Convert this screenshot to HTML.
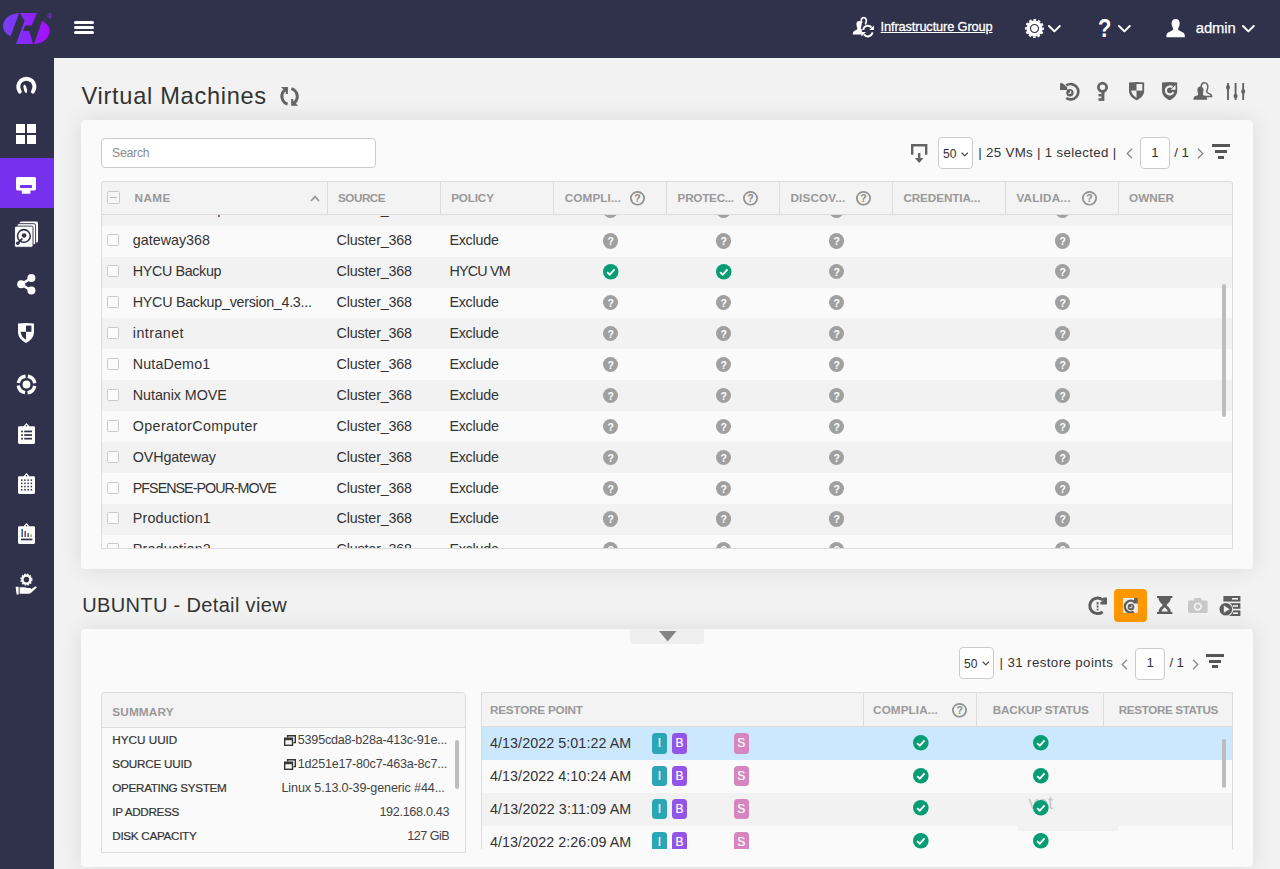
<!DOCTYPE html>
<html lang="en">
<head>
<meta charset="utf-8">
<title>Virtual Machines</title>
<style>
*{box-sizing:border-box;margin:0;padding:0}
html,body{width:1280px;height:869px;overflow:hidden}
body{background:#f2f2f2;font-family:"Liberation Sans",sans-serif;color:#333;font-size:14px;position:relative}
.abs{position:absolute}
svg{position:absolute;overflow:visible}
#top{position:absolute;left:0;top:0;width:1280px;height:58px;background:#30314a}
#side{position:absolute;left:0;top:0;width:54px;height:869px;background:#30314a}
#side .act{position:absolute;left:0;top:160px;width:54px;height:48px;background:#7631ef}
.toptxt{position:absolute;color:#fff;font-size:15px;white-space:nowrap;line-height:20px}
.card{position:absolute;left:81px;width:1172px;background:#fafafa;border-radius:4px;box-shadow:0 0 22px rgba(0,0,0,.10)}


.thead{position:absolute;background:#f3f3f3;border:1px solid #dcdcdc;border-radius:3px 3px 0 0}
.th{position:absolute;top:0;height:100%;font-weight:700;font-size:12.5px;color:#999;white-space:nowrap;line-height:31px}
.vl{position:absolute;top:0;width:1px;height:100%;background:#dcdcdc}
.tbody{position:absolute;overflow:hidden;border-left:1px solid #dcdcdc;border-right:1px solid #dcdcdc;border-bottom:1px solid #dcdcdc}
.tr{position:absolute;left:0;width:100%;background:#fafafa}
.tr.odd{background:#f2f2f2}
.tr.sel{background:#cce8ff}
.td{position:absolute;white-space:nowrap;font-size:14px;color:#333;line-height:20px}
.cb{position:absolute;width:12px;height:12px;border:1px solid #c9c9c9;border-radius:1.5px;background:#fbfbfb}
.q{position:absolute;border-radius:50%;background:#a0a0a0;color:#fff;font-weight:700;font-size:10.5px;text-align:center;line-height:16px}
.pg{position:absolute;white-space:nowrap;font-size:13.5px;color:#333;line-height:20px}
.box{position:absolute;background:#fff;border:1px solid #ccc;border-radius:4px}
.badge{position:absolute;width:15px;height:20.3px;border-radius:3.5px;color:#fff;font-size:12px;line-height:21.3px;text-align:center;-webkit-text-stroke:.2px #fff}
.sl{position:absolute;left:10px;font-size:12.5px;color:#333;white-space:nowrap;line-height:16px}
.sv{position:absolute;font-size:12.5px;color:#444;white-space:nowrap;line-height:16px}
.sb{position:absolute;width:4px;background:#bdbdbd;border-radius:2px}
.t{position:absolute;white-space:nowrap}
</style>
</head>
<body>
<div id="top"></div>
<div id="side"><div class="act" style="top:158px;height:50px"></div></div>
<svg style="left:3px;top:13px;width:47px;height:31px" viewBox="0 0 47 31">
<defs><linearGradient id="lg" gradientUnits="userSpaceOnUse" x1="0" y1="0" x2="47" y2="0"><stop offset="0" stop-color="#7442f5"/><stop offset=".5" stop-color="#8a27fa"/><stop offset="1" stop-color="#a80cff"/></linearGradient></defs>
<path fill="url(#lg)" d="M16.2 0 C7 0.5 0 6 0 13 C0 17.5 3 21.2 7.6 23.2 Z"/>
<path fill="url(#lg)" d="M17 0 H33.8 L28.8 12.4 H22 L20.2 18 H26.2 L30.2 31 H13 L21.6 7.8 Z"/>
<path fill="url(#lg)" d="M39 8 C43.5 10 46.6 13.6 46.6 18 C46.6 25.4 39.6 30.6 31 31 Z"/>
</svg>
<div class="abs" style="left:47.2px;top:13px;font-size:7px;line-height:8px;color:#a630ff">®</div>
<div class="abs" style="left:74px;top:21px;width:20px;height:3px;border-radius:1.5px;background:#fff"></div>
<div class="abs" style="left:74px;top:26px;width:20px;height:3px;border-radius:1.5px;background:#fff"></div>
<div class="abs" style="left:74px;top:31px;width:20px;height:3px;border-radius:1.5px;background:#fff"></div>
<svg style="left:16px;top:77px;width:21px;height:18px" viewBox="0 0 21 18">
<path d="M3.800 14.600 A8.100 8.100 0 1 1 16.900 14.600" fill="none" stroke="#fff" stroke-width="4" stroke-linecap="round"/>
<ellipse cx="9.300" cy="11.900" rx="1.500" ry="4.200" fill="#fff" transform="rotate(-14 9.300 11.900)"/></svg>
<div class="abs" style="left:16px;top:124px;width:9.200px;height:9.200px;background:#fff"></div>
<div class="abs" style="left:27.2px;top:124px;width:9.200px;height:9.200px;background:#fff"></div>
<div class="abs" style="left:16px;top:135.2px;width:9.200px;height:9.200px;background:#fff"></div>
<div class="abs" style="left:27.2px;top:135.2px;width:9.200px;height:9.200px;background:#fff"></div>
<svg style="left:16px;top:177px;width:20px;height:17px" viewBox="0 0 20 17">
<rect x="0" y="0" width="20" height="13.4" rx="1.6" fill="#fff"/><rect x="5.8" y="13" width="8.6" height="3.8" rx=".6" fill="#fff"/>
<rect x="4" y="8.100" width="12" height="2.900" rx=".8" fill="#7631ef"/></svg>
<svg style="left:13.600px;top:220.700px;width:24.700px;height:26.700px" viewBox="0 0 24 26">
<rect x="5.4" y="0.4" width="18" height="20.6" rx="1.6" fill="#fff"/>
<rect x="3" y="2.6" width="18" height="20.6" rx="1.6" fill="#fff" stroke="#30314a" stroke-width=".9"/>
<rect x="0.5" y="5" width="18" height="20.6" rx="1.6" fill="#fff" stroke="#30314a" stroke-width=".9"/>
<circle cx="9.6" cy="14.6" r="6.2" fill="none" stroke="#30314a" stroke-width="1.5"/>
<circle cx="9.8" cy="14.2" r="2.2" fill="#30314a"/>
<path d="M3.6 22 L7.6 17.6" stroke="#30314a" stroke-width="1.8" stroke-linecap="round"/>
<circle cx="3.6" cy="21.6" r="1.7" fill="#30314a"/></svg>
<svg style="left:17px;top:274px;width:19px;height:21px" viewBox="0 0 19 21">
<path d="M14.4 4 L4.2 10.3 L14.4 16.6" fill="none" stroke="#fff" stroke-width="2.6"/>
<circle cx="14.4" cy="4.1" r="4" fill="#fff"/><circle cx="4.2" cy="10.3" r="4" fill="#fff"/><circle cx="14.4" cy="16.6" r="4" fill="#fff"/></svg>
<svg style="left:18px;top:323px;width:16px;height:20px" viewBox="0 0 16 20">
<path d="M0 .6 Q8 -0.6 16 .6 V9 C16 14 12.5 17.6 8 20 C3.500 17.6 0 14 0 9 Z" fill="#fff"/>
<rect x="8" y="2.600" width="5.400" height="6.200" fill="#30314a"/>
<path d="M2.600 8.800 H8 V16.800 C5 15 3 12.500 2.600 8.800 Z" fill="#30314a"/></svg>
<svg style="left:16px;top:374px;width:21px;height:21px" viewBox="0 0 21 21">
<circle cx="10.5" cy="10.5" r="8.3" fill="none" stroke="#fff" stroke-width="3.4" stroke-dasharray="10.4 2.64" stroke-dashoffset="-1.32" transform="rotate(-90 10.5 10.5)"/>
<circle cx="10.5" cy="10.500" r="3.900" fill="#fff"/></svg>
<svg style="left:18px;top:423px;width:17px;height:21px" viewBox="0 0 17 21">
<path d="M1.400 3.200 H5.600 L8.500 0 L11.400 3.200 H15.600 Q17 3.200 17 4.600 V19.600 Q17 21 15.600 21 H1.400 Q0 21 0 19.600 V4.600 Q0 3.200 1.400 3.200 Z" fill="#fff"/>
<circle cx="8.500" cy="2.800" r=".8" fill="#30314a"/><rect x="3.200" y="7.6" width="1.700" height="1.700" fill="#30314a"/><rect x="6.200" y="7.6" width="7.800" height="1.700" fill="#30314a"/><rect x="3.200" y="11.2" width="1.700" height="1.700" fill="#30314a"/><rect x="6.200" y="11.2" width="7.800" height="1.700" fill="#30314a"/><rect x="3.200" y="14.8" width="1.700" height="1.700" fill="#30314a"/><rect x="6.200" y="14.8" width="7.800" height="1.700" fill="#30314a"/></svg>
<svg style="left:18px;top:473px;width:17px;height:21px" viewBox="0 0 17 21">
<path d="M1.400 3.200 H5.600 L8.500 0 L11.400 3.200 H15.600 Q17 3.200 17 4.600 V19.600 Q17 21 15.600 21 H1.400 Q0 21 0 19.600 V4.600 Q0 3.200 1.400 3.200 Z" fill="#fff"/>
<circle cx="8.500" cy="2.800" r=".8" fill="#30314a"/><rect x="3" y="6.4" width="1.500" height="1.500" fill="#30314a"/><rect x="6.2" y="6.4" width="1.500" height="1.500" fill="#30314a"/><rect x="9.4" y="6.4" width="1.500" height="1.500" fill="#30314a"/><rect x="12.6" y="6.4" width="1.500" height="1.500" fill="#30314a"/><rect x="3" y="9.6" width="1.500" height="1.500" fill="#30314a"/><rect x="6.2" y="9.6" width="1.500" height="1.500" fill="#30314a"/><rect x="9.4" y="9.6" width="1.500" height="1.500" fill="#30314a"/><rect x="12.6" y="9.6" width="1.500" height="1.500" fill="#30314a"/><rect x="3" y="12.8" width="1.500" height="1.500" fill="#30314a"/><rect x="6.2" y="12.8" width="1.500" height="1.500" fill="#30314a"/><rect x="9.4" y="12.8" width="1.500" height="1.500" fill="#30314a"/><rect x="12.6" y="12.8" width="1.500" height="1.500" fill="#30314a"/><rect x="3" y="16" width="1.500" height="1.500" fill="#30314a"/><rect x="6.2" y="16" width="1.500" height="1.500" fill="#30314a"/><rect x="9.4" y="16" width="1.500" height="1.500" fill="#30314a"/><rect x="12.6" y="16" width="1.500" height="1.500" fill="#30314a"/></svg>
<svg style="left:18px;top:523px;width:17px;height:21px" viewBox="0 0 17 21">
<path d="M1.400 3.200 H5.600 L8.500 0 L11.400 3.200 H15.600 Q17 3.200 17 4.600 V19.600 Q17 21 15.600 21 H1.400 Q0 21 0 19.600 V4.600 Q0 3.200 1.400 3.200 Z" fill="#fff"/>
<circle cx="8.500" cy="2.800" r=".8" fill="#30314a"/><rect x="3.400" y="6" width="1.600" height="8" fill="#2d6aa8"/><rect x="6.400" y="8" width="1.600" height="6" fill="#c0392b"/><rect x="9.400" y="10" width="1.600" height="4" fill="#2d6aa8"/><rect x="12.300" y="11.400" width="1.600" height="2.600" fill="#d9a400"/><rect x="3" y="15.600" width="11.400" height="1.700" fill="#30314a"/></svg>
<svg style="left:15px;top:574px;width:22px;height:21px" viewBox="0 0 22 21">
<circle cx="11.4" cy="5.600" r="3.900" fill="none" stroke="#fff" stroke-width="2.200"/>
<circle cx="11.4" cy="5.600" r="5.300" fill="none" stroke="#fff" stroke-width="1.600" stroke-dasharray="1.660 1.110"/>
<path d="M4.600 13.200 H9.600 Q11 13.200 12 14 H15.200 Q16.400 14.200 16 15.200 L20.200 12.600 Q21.600 12.200 21.800 13.400 L16.400 18.600 Q15 19.800 13.400 19.800 H4.600 Z" fill="#fff"/>
<path d="M0.600 12.800 H3.600 V20.400 H1.600 Z" fill="#fff"/></svg>
<svg style="left:852px;top:16px;width:23px;height:22px" viewBox="0 0 23 22">
<path d="M9.600 6.400 C8.600 3.600 9.800 1.700 11.700 1.700 C13.800 1.700 14.700 3.600 14.200 5.600 C14 6.600 13.600 7.200 13.600 7.800" fill="none" stroke="#fff" stroke-width="1.700" stroke-linecap="round"/>
<path d="M7.100 5 C9 5 9.900 6.600 9.700 8.600 C9.600 10.200 9 11.200 8.900 12 C8.800 12.800 9.400 13.200 9.900 13.600 V18.400 H0.800 C0.800 15.800 1.600 15 3.600 14.200 C4.800 13.700 5.400 13.200 5.300 12.200 C5.100 11.200 4.500 10.200 4.400 8.600 C4.300 6.600 5.200 5 7.100 5 Z" fill="#fff"/>
<path d="M11.200 14 A4.700 4.700 0 0 1 19.600 11.600" fill="none" stroke="#fff" stroke-width="1.900"/>
<path d="M22 9.400 V13.900 H17.300 Z" fill="#fff"/>
<path d="M20.500 16.400 A4.700 4.700 0 0 1 12 18.400" fill="none" stroke="#fff" stroke-width="1.900"/>
<path d="M9.400 20.600 V16 H14 Z" fill="#fff"/></svg>
<div class="t " style="top:16.86px;font-size:12.8px;line-height:20px;color:#fff;letter-spacing:-0.129px;left:880.60px;text-decoration:underline;text-underline-offset:1px;-webkit-text-stroke:.3px #fff;">Infrastructure Group</div>
<svg style="left:1024.900px;top:18.500px;width:19px;height:19px" viewBox="0 0 20 20">
<circle cx="10" cy="10" r="8.500" fill="#fff"/>
<circle cx="10" cy="10" r="9.100" fill="none" stroke="#fff" stroke-width="1.900" stroke-dasharray="2.780 1.985" stroke-dashoffset="1.390"/>
<circle cx="10" cy="10" r="4.200" fill="none" stroke="#30314a" stroke-width="1.200"/></svg>
<svg style="left:1048.2px;top:25px;width:12.8px;height:7.4px" viewBox="0 0 12.8 7.4"><path d="M1 1 L6.4 6.4 L11.8 1" fill="none" stroke="#fff" stroke-width="2" stroke-linecap="round" stroke-linejoin="round"/></svg>
<div class="t " style="top:12.89px;font-size:26px;line-height:30px;color:#fff;font-weight:700;left:1097.90px;transform:scaleX(.84);transform-origin:0 0;">?</div>
<svg style="left:1118px;top:25px;width:12.8px;height:7.4px" viewBox="0 0 12.8 7.4"><path d="M1 1 L6.4 6.4 L11.8 1" fill="none" stroke="#fff" stroke-width="2" stroke-linecap="round" stroke-linejoin="round"/></svg>
<svg style="left:1165.800px;top:18.600px;width:19.300px;height:18.300px" viewBox="0 0 20 19">
<path d="M10 0 C13 0 14.400 2.200 14.200 5 C14 7.600 13 9 12.600 10.200 C12.400 11.400 13.200 12 15 12.600 C18.600 13.800 19.600 15 19.600 19 H0.400 C0.400 15 1.400 13.800 5 12.600 C6.800 12 7.600 11.400 7.400 10.200 C7 9 6 7.600 5.800 5 C5.600 2.200 7 0 10 0 Z" fill="#fff"/></svg>
<div class="t " style="top:18.07px;font-size:14.8px;line-height:20px;color:#fff;letter-spacing:-0.069px;left:1195.80px;-webkit-text-stroke:.25px #fff;">admin</div>
<svg style="left:1241.8px;top:25px;width:12.8px;height:7.4px" viewBox="0 0 12.8 7.4"><path d="M1 1 L6.4 6.4 L11.8 1" fill="none" stroke="#fff" stroke-width="2" stroke-linecap="round" stroke-linejoin="round"/></svg>
<div class="t " style="top:80.82px;font-size:23.6px;line-height:30px;color:#333;letter-spacing:0.711px;left:81.50px;">Virtual Machines</div>
<svg style="left:279.900px;top:86.900px;width:19.100px;height:18.800px" viewBox="0 0 19.100 18.800">
<path d="M7.600 17.200 A8.300 8.300 0 0 1 4.600 3.200" fill="none" stroke="#636363" stroke-width="3"/>
<path d="M11.400 1.600 A8.300 8.300 0 0 1 14.600 15.600" fill="none" stroke="#636363" stroke-width="3"/>
<path d="M1 0 H7.900 V6.900 H5.800 V4.800 Z" fill="#636363"/>
<path d="M18.100 18.800 H11.200 V11.900 H13.300 V14 Z" fill="#636363"/></svg>
<div class="card" id="card1" style="top:120px;height:449px"></div>
<div class="box" style="left:101px;top:138px;width:275px;height:30px;border-radius:4px"></div>
<div class="t " style="top:142.74px;font-size:12.3px;line-height:20px;color:#8c8c8c;letter-spacing:-0.267px;left:112.00px;">Search</div>
<svg style="left:1060.100px;top:81.900px;width:19.700px;height:19.100px" viewBox="0 0 19.700 19.100">
<path d="M6.200 3.400 A7.700 7.700 0 1 1 6.200 16" fill="none" stroke="#636363" stroke-width="2.700"/>
<path d="M0 1.200 H2.600 L7.200 5.200 L7.400 8 H0 Z" fill="#636363"/>
<circle cx="9.900" cy="10.700" r="3.700" fill="#636363"/><path d="M10.700 8.800 V11.200 H8.400" fill="none" stroke="#f2f2f2" stroke-width="1.100"/></svg>
<svg style="left:1097.400px;top:82.100px;width:11px;height:19px" viewBox="0 0 11 19">
<circle cx="5.500" cy="5.300" r="4.100" fill="none" stroke="#636363" stroke-width="2.800"/>
<rect x="4.300" y="9.400" width="3.100" height="9.500" fill="#636363"/><rect x="1.500" y="12" width="3" height="2.400" fill="#636363"/><rect x="1.500" y="16.200" width="3" height="2.700" fill="#636363"/></svg>
<svg style="left:1128.600px;top:81.900px;width:15.200px;height:18.300px" viewBox="0 0 15.200 18.300">
<path d="M0 .5 Q7.600 -0.500 15.200 .5 V8.400 C15.200 13 12 16.200 7.600 18.300 C3.200 16.200 0 13 0 8.400 Z" fill="#636363"/>
<rect x="7.500" y="2" width="5.800" height="6.600" fill="#f2f2f2"/>
<path d="M2.200 8.600 H7.500 V15.800 C4.600 14.200 2.600 12 2.200 8.600 Z" fill="#f2f2f2"/></svg>
<svg style="left:1161.600px;top:81.700px;width:15.200px;height:18.300px" viewBox="0 0 15.200 18.300">
<path d="M0 .5 Q7.600 -0.500 15.200 .5 V8.400 C15.200 13 12 16.200 7.600 18.300 C3.200 16.200 0 13 0 8.400 Z" fill="#636363"/>
<path d="M11.400 10.300 A4 4 0 1 1 10.400 5.300" fill="none" stroke="#f2f2f2" stroke-width="2.100"/>
<path d="M13.600 2.900 V7.700 H8.800 Z" fill="#f2f2f2"/></svg>
<svg style="left:1193px;top:82px;width:19.400px;height:18.200px" viewBox="0 0 19.400 18.200">
<path d="M11.400 .8 C14 .8 15 2.800 14.800 5.200 C14.700 7.200 13.800 8.400 13.600 9.400 C13.500 10.300 14.200 10.800 15.600 11.400 C17.600 12.200 18.600 13 18.600 14.400 H9 V8 C8.400 6.800 8.200 6 8.200 4.800 C8.200 2.600 9.200 .8 11.400 .8 Z" fill="#f2f2f2" stroke="#636363" stroke-width="1.500"/>
<path d="M7.400 4.400 C9.400 4.400 10.600 6 10.500 8.200 C10.400 10 9.800 11 9.800 12 C9.800 13 10.600 13.400 11.800 13.800 C13.600 14.400 14.200 15.400 14.200 17.800 H0.400 C0.400 15.400 1.200 14.400 3.200 13.800 C4.400 13.400 5.200 13 5.200 12 C5.200 11 4.500 10 4.400 8.200 C4.300 6 5.400 4.400 7.400 4.400 Z" fill="#636363"/></svg>
<svg style="left:1225.900px;top:82.900px;width:19.200px;height:17px" viewBox="0 0 19.200 17">
<path d="M2 0 V17 M9.600 0 V17 M17.200 0 V17" stroke="#636363" stroke-width="1.900"/>
<ellipse cx="2" cy="4.400" rx="2" ry="2.300" fill="#636363"/><ellipse cx="9.600" cy="13" rx="2" ry="2.300" fill="#636363"/><ellipse cx="17.200" cy="8.600" rx="2" ry="2.300" fill="#636363"/></svg>
<svg style="left:911.100px;top:144.100px;width:16.400px;height:19px" viewBox="0 0 16.400 19">
<path d="M1.200 10.800 V1.200 H15.200 V10.800" fill="none" stroke="#636363" stroke-width="2.400"/>
<path d="M8.200 9 V15" stroke="#636363" stroke-width="2.400"/><path d="M3.900 14 H12.500 L8.200 19 Z" fill="#636363"/></svg>
<div class="box" style="left:938px;top:137px;width:35px;height:32px"></div>
<div class="t " style="top:143.61px;font-size:12.1px;line-height:20px;color:#333;letter-spacing:-0.169px;left:943.10px;">50</div>
<svg style="left:960.7px;top:151.6px;width:7.6px;height:4.8px" viewBox="0 0 7.6 4.8"><path d="M1 1 L3.8 3.8 L6.6 1" fill="none" stroke="#444" stroke-width="1.1" stroke-linecap="round" stroke-linejoin="round"/></svg>
<div class="t " style="top:143.19px;font-size:13.3px;line-height:20px;color:#333;letter-spacing:0.318px;left:978.30px;">| 25 VMs | 1 selected |</div>
<svg style="left:1126px;top:148px;width:7px;height:11px" viewBox="0 0 7 11"><path d="M6 .8 L1.200 5.500 L6 10.200" fill="none" stroke="#888" stroke-width="1.300"/></svg>
<div class="box" style="left:1140px;top:137px;width:30px;height:32px"></div>
<div class="t " style="top:143.39px;font-size:13.3px;line-height:20px;color:#333;left:1151.30px;">1</div>
<div class="t " style="top:143.39px;font-size:13.3px;line-height:20px;color:#333;letter-spacing:-0.119px;left:1174.30px;">/ 1</div>
<svg style="left:1197px;top:148px;width:7px;height:11px" viewBox="0 0 7 11"><path d="M1 .8 L5.800 5.500 L1 10.200" fill="none" stroke="#888" stroke-width="1.300"/></svg>
<div class="abs" style="left:1211.5px;top:144px;width:18px;height:3px;background:#555"></div><div class="abs" style="left:1214.5px;top:149.8px;width:12px;height:3px;background:#555"></div><div class="abs" style="left:1217.5px;top:155.6px;width:6px;height:3px;background:#555"></div>
<div class="thead" style="left:101px;top:181px;width:1132px;height:34px">
<div class="vl" style="left:225px"></div>
<div class="vl" style="left:338px"></div>
<div class="vl" style="left:451px"></div>
<div class="vl" style="left:564px"></div>
<div class="vl" style="left:677px"></div>
<div class="vl" style="left:790px"></div>
<div class="vl" style="left:903px"></div>
<div class="vl" style="left:1016px"></div>
<div class="cb" style="left:5px;top:9px;width:13px;height:13px;background:#f6f6f6"><div class="abs" style="left:2px;top:4.500px;width:7px;height:1.500px;background:#bbb"></div></div>
<div class="t " style="top:6.25px;font-size:11.7px;line-height:20px;color:#999;font-weight:700;letter-spacing:0.394px;left:32.60px;">NAME</div>
<div class="t " style="top:6.25px;font-size:11.7px;line-height:20px;color:#999;font-weight:700;letter-spacing:-0.476px;left:236.00px;">SOURCE</div>
<div class="t " style="top:6.25px;font-size:11.7px;line-height:20px;color:#999;font-weight:700;letter-spacing:-0.148px;left:349.20px;">POLICY</div>
<div class="t " style="top:6.25px;font-size:11.7px;line-height:20px;color:#999;font-weight:700;letter-spacing:0.141px;left:462.70px;">COMPLI...</div>
<div class="t " style="top:6.25px;font-size:11.7px;line-height:20px;color:#999;font-weight:700;letter-spacing:-0.242px;left:575.60px;">PROTEC...</div>
<div class="t " style="top:6.25px;font-size:11.7px;line-height:20px;color:#999;font-weight:700;letter-spacing:0.155px;left:688.50px;">DISCOV...</div>
<div class="t " style="top:6.25px;font-size:11.7px;line-height:20px;color:#999;font-weight:700;letter-spacing:-0.080px;left:801.40px;">CREDENTIA...</div>
<div class="t " style="top:6.25px;font-size:11.7px;line-height:20px;color:#999;font-weight:700;letter-spacing:0.189px;left:914.50px;">VALIDA...</div>
<div class="t " style="top:6.25px;font-size:11.7px;line-height:20px;color:#999;font-weight:700;letter-spacing:0.042px;left:1027.00px;">OWNER</div>
</div>
<svg style="left:310px;top:194.500px;width:10px;height:7px" viewBox="0 0 10 7"><path d="M1 6 L5 1.600 L9 6" fill="none" stroke="#999" stroke-width="1.800"/></svg>
<svg style="left:630.0px;top:190.7px;width:15px;height:14.600px" viewBox="0 0 15 14.600"><ellipse cx="7.500" cy="7.300" rx="6.650" ry="6.450" fill="none" stroke="#8f8f8f" stroke-width="1.700"/></svg>
<div class="abs" style="left:630.0px;top:190.7px;width:15px;height:14.600px;color:#8a8a8a;font-size:10.500px;font-weight:700;line-height:15px;text-align:center">?</div>
<svg style="left:743.0px;top:190.7px;width:15px;height:14.600px" viewBox="0 0 15 14.600"><ellipse cx="7.500" cy="7.300" rx="6.650" ry="6.450" fill="none" stroke="#8f8f8f" stroke-width="1.700"/></svg>
<div class="abs" style="left:743.0px;top:190.7px;width:15px;height:14.600px;color:#8a8a8a;font-size:10.500px;font-weight:700;line-height:15px;text-align:center">?</div>
<svg style="left:856.0px;top:190.7px;width:15px;height:14.600px" viewBox="0 0 15 14.600"><ellipse cx="7.500" cy="7.300" rx="6.650" ry="6.450" fill="none" stroke="#8f8f8f" stroke-width="1.700"/></svg>
<div class="abs" style="left:856.0px;top:190.7px;width:15px;height:14.600px;color:#8a8a8a;font-size:10.500px;font-weight:700;line-height:15px;text-align:center">?</div>
<svg style="left:1082.0px;top:190.7px;width:15px;height:14.600px" viewBox="0 0 15 14.600"><ellipse cx="7.500" cy="7.300" rx="6.650" ry="6.450" fill="none" stroke="#8f8f8f" stroke-width="1.700"/></svg>
<div class="abs" style="left:1082.0px;top:190.7px;width:15px;height:14.600px;color:#8a8a8a;font-size:10.500px;font-weight:700;line-height:15px;text-align:center">?</div>
<div class="tbody" style="left:101px;top:215px;width:1132px;height:334px">
<div class="tr odd" style="top:-20px;height:31px">
<div class="cb" style="left:5px;top:8.1px"></div>
<div class="t " style="top:4.13px;font-size:14.3px;line-height:20px;color:#333;letter-spacing:-0.331px;left:30.80px;">DC-Windows-prod</div>
<div class="t " style="top:4.13px;font-size:14.3px;line-height:20px;color:#333;letter-spacing:-0.161px;left:234.60px;">Cluster_368</div>
<div class="t " style="top:4.13px;font-size:14.3px;line-height:20px;color:#333;letter-spacing:-0.227px;left:347.40px;">Exclude</div>
<div class="q" style="left:500.95px;top:7.13px;width:15.5px;height:15.5px;line-height:16.0px">?</div>
<div class="q" style="left:613.95px;top:7.13px;width:15.5px;height:15.5px;line-height:16.0px">?</div>
<div class="q" style="left:726.95px;top:7.13px;width:15.5px;height:15.5px;line-height:16.0px">?</div>
<div class="q" style="left:952.95px;top:7.13px;width:15.5px;height:15.5px;line-height:16.0px">?</div>
</div>
<div class="tr" style="top:11px;height:31px">
<div class="cb" style="left:5px;top:8.0px"></div>
<div class="t " style="top:4.06px;font-size:14.3px;line-height:20px;color:#333;letter-spacing:0.010px;left:30.80px;">gateway368</div>
<div class="t " style="top:4.06px;font-size:14.3px;line-height:20px;color:#333;letter-spacing:-0.161px;left:234.60px;">Cluster_368</div>
<div class="t " style="top:4.06px;font-size:14.3px;line-height:20px;color:#333;letter-spacing:-0.227px;left:347.40px;">Exclude</div>
<div class="q" style="left:500.95px;top:7.07px;width:15.5px;height:15.5px;line-height:16.0px">?</div>
<div class="q" style="left:613.95px;top:7.07px;width:15.5px;height:15.5px;line-height:16.0px">?</div>
<div class="q" style="left:726.95px;top:7.07px;width:15.5px;height:15.5px;line-height:16.0px">?</div>
<div class="q" style="left:952.95px;top:7.07px;width:15.5px;height:15.5px;line-height:16.0px">?</div>
</div>
<div class="tr odd" style="top:42px;height:31px">
<div class="cb" style="left:5px;top:7.9px"></div>
<div class="t " style="top:3.99px;font-size:14.3px;line-height:20px;color:#333;letter-spacing:-0.350px;left:30.80px;">HYCU Backup</div>
<div class="t " style="top:3.99px;font-size:14.3px;line-height:20px;color:#333;letter-spacing:-0.161px;left:234.60px;">Cluster_368</div>
<div class="t " style="top:3.99px;font-size:14.3px;line-height:20px;color:#333;letter-spacing:-0.760px;left:347.40px;">HYCU VM</div>
<svg class="ok" style="left:500.95px;top:6.99px;width:15.5px;height:15.5px" viewBox="0 0 16 16"><circle cx="8" cy="8" r="8" fill="#069c74"/><path d="M4.2 8.3 L7 11 L11.9 5.6" fill="none" stroke="#fff" stroke-width="1.9"/></svg>
<svg class="ok" style="left:613.95px;top:6.99px;width:15.5px;height:15.5px" viewBox="0 0 16 16"><circle cx="8" cy="8" r="8" fill="#069c74"/><path d="M4.2 8.3 L7 11 L11.9 5.6" fill="none" stroke="#fff" stroke-width="1.9"/></svg>
<div class="q" style="left:726.95px;top:6.99px;width:15.5px;height:15.5px;line-height:16.0px">?</div>
<div class="q" style="left:952.95px;top:6.99px;width:15.5px;height:15.5px;line-height:16.0px">?</div>
</div>
<div class="tr" style="top:73px;height:30px">
<div class="cb" style="left:5px;top:7.9px"></div>
<div class="t " style="top:3.92px;font-size:14.3px;line-height:20px;color:#333;letter-spacing:-0.273px;left:30.80px;">HYCU Backup_version_4.3...</div>
<div class="t " style="top:3.92px;font-size:14.3px;line-height:20px;color:#333;letter-spacing:-0.161px;left:234.60px;">Cluster_368</div>
<div class="t " style="top:3.92px;font-size:14.3px;line-height:20px;color:#333;letter-spacing:-0.227px;left:347.40px;">Exclude</div>
<div class="q" style="left:500.95px;top:6.92px;width:15.5px;height:15.5px;line-height:16.0px">?</div>
<div class="q" style="left:613.95px;top:6.92px;width:15.5px;height:15.5px;line-height:16.0px">?</div>
<div class="q" style="left:726.95px;top:6.92px;width:15.5px;height:15.5px;line-height:16.0px">?</div>
<div class="q" style="left:952.95px;top:6.92px;width:15.5px;height:15.5px;line-height:16.0px">?</div>
</div>
<div class="tr odd" style="top:103px;height:31px">
<div class="cb" style="left:5px;top:8.8px"></div>
<div class="t " style="top:4.85px;font-size:14.3px;line-height:20px;color:#333;letter-spacing:0.442px;left:30.80px;">intranet</div>
<div class="t " style="top:4.85px;font-size:14.3px;line-height:20px;color:#333;letter-spacing:-0.161px;left:234.60px;">Cluster_368</div>
<div class="t " style="top:4.85px;font-size:14.3px;line-height:20px;color:#333;letter-spacing:-0.227px;left:347.40px;">Exclude</div>
<div class="q" style="left:500.95px;top:7.86px;width:15.5px;height:15.5px;line-height:16.0px">?</div>
<div class="q" style="left:613.95px;top:7.86px;width:15.5px;height:15.5px;line-height:16.0px">?</div>
<div class="q" style="left:726.95px;top:7.86px;width:15.5px;height:15.5px;line-height:16.0px">?</div>
<div class="q" style="left:952.95px;top:7.86px;width:15.5px;height:15.5px;line-height:16.0px">?</div>
</div>
<div class="tr" style="top:134px;height:31px">
<div class="cb" style="left:5px;top:8.7px"></div>
<div class="t " style="top:4.78px;font-size:14.3px;line-height:20px;color:#333;letter-spacing:0.142px;left:30.80px;">NutaDemo1</div>
<div class="t " style="top:4.78px;font-size:14.3px;line-height:20px;color:#333;letter-spacing:-0.161px;left:234.60px;">Cluster_368</div>
<div class="t " style="top:4.78px;font-size:14.3px;line-height:20px;color:#333;letter-spacing:-0.227px;left:347.40px;">Exclude</div>
<div class="q" style="left:500.95px;top:7.79px;width:15.5px;height:15.5px;line-height:16.0px">?</div>
<div class="q" style="left:613.95px;top:7.79px;width:15.5px;height:15.5px;line-height:16.0px">?</div>
<div class="q" style="left:726.95px;top:7.79px;width:15.5px;height:15.5px;line-height:16.0px">?</div>
<div class="q" style="left:952.95px;top:7.79px;width:15.5px;height:15.5px;line-height:16.0px">?</div>
</div>
<div class="tr odd" style="top:165px;height:31px">
<div class="cb" style="left:5px;top:8.7px"></div>
<div class="t " style="top:4.71px;font-size:14.3px;line-height:20px;color:#333;letter-spacing:-0.049px;left:30.80px;">Nutanix MOVE</div>
<div class="t " style="top:4.71px;font-size:14.3px;line-height:20px;color:#333;letter-spacing:-0.161px;left:234.60px;">Cluster_368</div>
<div class="t " style="top:4.71px;font-size:14.3px;line-height:20px;color:#333;letter-spacing:-0.227px;left:347.40px;">Exclude</div>
<div class="q" style="left:500.95px;top:7.72px;width:15.5px;height:15.5px;line-height:16.0px">?</div>
<div class="q" style="left:613.95px;top:7.72px;width:15.5px;height:15.5px;line-height:16.0px">?</div>
<div class="q" style="left:726.95px;top:7.72px;width:15.5px;height:15.5px;line-height:16.0px">?</div>
<div class="q" style="left:952.95px;top:7.72px;width:15.5px;height:15.5px;line-height:16.0px">?</div>
</div>
<div class="tr" style="top:196px;height:31px">
<div class="cb" style="left:5px;top:8.6px"></div>
<div class="t " style="top:4.64px;font-size:14.3px;line-height:20px;color:#333;letter-spacing:0.374px;left:30.80px;">OperatorComputer</div>
<div class="t " style="top:4.64px;font-size:14.3px;line-height:20px;color:#333;letter-spacing:-0.161px;left:234.60px;">Cluster_368</div>
<div class="t " style="top:4.64px;font-size:14.3px;line-height:20px;color:#333;letter-spacing:-0.227px;left:347.40px;">Exclude</div>
<div class="q" style="left:500.95px;top:7.65px;width:15.5px;height:15.5px;line-height:16.0px">?</div>
<div class="q" style="left:613.95px;top:7.65px;width:15.5px;height:15.5px;line-height:16.0px">?</div>
<div class="q" style="left:726.95px;top:7.65px;width:15.5px;height:15.5px;line-height:16.0px">?</div>
<div class="q" style="left:952.95px;top:7.65px;width:15.5px;height:15.5px;line-height:16.0px">?</div>
</div>
<div class="tr odd" style="top:227px;height:31px">
<div class="cb" style="left:5px;top:8.5px"></div>
<div class="t " style="top:4.57px;font-size:14.3px;line-height:20px;color:#333;letter-spacing:-0.130px;left:30.80px;">OVHgateway</div>
<div class="t " style="top:4.57px;font-size:14.3px;line-height:20px;color:#333;letter-spacing:-0.161px;left:234.60px;">Cluster_368</div>
<div class="t " style="top:4.57px;font-size:14.3px;line-height:20px;color:#333;letter-spacing:-0.227px;left:347.40px;">Exclude</div>
<div class="q" style="left:500.95px;top:7.57px;width:15.5px;height:15.5px;line-height:16.0px">?</div>
<div class="q" style="left:613.95px;top:7.57px;width:15.5px;height:15.5px;line-height:16.0px">?</div>
<div class="q" style="left:726.95px;top:7.57px;width:15.5px;height:15.5px;line-height:16.0px">?</div>
<div class="q" style="left:952.95px;top:7.57px;width:15.5px;height:15.5px;line-height:16.0px">?</div>
</div>
<div class="tr" style="top:258px;height:31px">
<div class="cb" style="left:5px;top:8.5px"></div>
<div class="t " style="top:4.50px;font-size:14.3px;line-height:20px;color:#333;letter-spacing:-0.980px;left:30.80px;">PFSENSE-POUR-MOVE</div>
<div class="t " style="top:4.50px;font-size:14.3px;line-height:20px;color:#333;letter-spacing:-0.161px;left:234.60px;">Cluster_368</div>
<div class="t " style="top:4.50px;font-size:14.3px;line-height:20px;color:#333;letter-spacing:-0.227px;left:347.40px;">Exclude</div>
<div class="q" style="left:500.95px;top:7.51px;width:15.5px;height:15.5px;line-height:16.0px">?</div>
<div class="q" style="left:613.95px;top:7.51px;width:15.5px;height:15.5px;line-height:16.0px">?</div>
<div class="q" style="left:726.95px;top:7.51px;width:15.5px;height:15.5px;line-height:16.0px">?</div>
<div class="q" style="left:952.95px;top:7.51px;width:15.5px;height:15.5px;line-height:16.0px">?</div>
</div>
<div class="tr odd" style="top:289px;height:31px">
<div class="cb" style="left:5px;top:8.4px"></div>
<div class="t " style="top:4.43px;font-size:14.3px;line-height:20px;color:#333;letter-spacing:0.161px;left:30.80px;">Production1</div>
<div class="t " style="top:4.43px;font-size:14.3px;line-height:20px;color:#333;letter-spacing:-0.161px;left:234.60px;">Cluster_368</div>
<div class="t " style="top:4.43px;font-size:14.3px;line-height:20px;color:#333;letter-spacing:-0.227px;left:347.40px;">Exclude</div>
<div class="q" style="left:500.95px;top:7.43px;width:15.5px;height:15.5px;line-height:16.0px">?</div>
<div class="q" style="left:613.95px;top:7.43px;width:15.5px;height:15.5px;line-height:16.0px">?</div>
<div class="q" style="left:726.95px;top:7.43px;width:15.5px;height:15.5px;line-height:16.0px">?</div>
<div class="q" style="left:952.95px;top:7.43px;width:15.5px;height:15.5px;line-height:16.0px">?</div>
</div>
<div class="tr" style="top:320px;height:31px">
<div class="cb" style="left:5px;top:8.3px"></div>
<div class="t " style="top:4.36px;font-size:14.3px;line-height:20px;color:#333;letter-spacing:0.161px;left:30.80px;">Production2</div>
<div class="t " style="top:4.36px;font-size:14.3px;line-height:20px;color:#333;letter-spacing:-0.161px;left:234.60px;">Cluster_368</div>
<div class="t " style="top:4.36px;font-size:14.3px;line-height:20px;color:#333;letter-spacing:-0.227px;left:347.40px;">Exclude</div>
<div class="q" style="left:500.95px;top:7.37px;width:15.5px;height:15.5px;line-height:16.0px">?</div>
<div class="q" style="left:613.95px;top:7.37px;width:15.5px;height:15.5px;line-height:16.0px">?</div>
<div class="q" style="left:726.95px;top:7.37px;width:15.5px;height:15.5px;line-height:16.0px">?</div>
<div class="q" style="left:952.95px;top:7.37px;width:15.5px;height:15.5px;line-height:16.0px">?</div>
</div>
</div>
<div class="sb" style="left:1222px;top:284px;height:133px"></div>
<div class="t " style="top:592.07px;font-size:20px;line-height:26px;color:#333;letter-spacing:0.343px;left:82.30px;">UBUNTU - Detail view</div>
<svg style="left:1088.400px;top:595.500px;width:19.500px;height:19.500px" viewBox="0 0 19.500 19.500">
<path d="M15.100 4.300 A7.800 7.800 0 1 0 14.600 15.800" fill="none" stroke="#5e5e5e" stroke-width="3"/>
<path d="M15.100 1.400 H19 V8.500 H12.400 V6.100 L15.100 5 Z" fill="#5e5e5e"/>
<path d="M9.600 6.100 V8.500 M9.600 9.600 V11.500 M9.600 12.800 V14.300" stroke="#5e5e5e" stroke-width="1.900"/></svg>
<div class="abs" style="left:1114px;top:589px;width:33px;height:33px;border-radius:4px;background:#ff9803"></div>
<svg style="left:1123.100px;top:598.100px;width:14.800px;height:14.900px;overflow:hidden" viewBox="0 0 14.800 14.900">
<rect x="0" y="0" width="14.800" height="14.900" fill="#ececec"/>
<path d="M11.600 4.100 A5.900 5.900 0 1 0 10.800 13.700" fill="none" stroke="#5e5e5e" stroke-width="2.400"/>
<path d="M11.400 0 H14.800 V5.600 H10.400 V3.600 Z" fill="#5e5e5e"/>
<circle cx="8" cy="9.100" r="3.300" fill="#5e5e5e"/><path d="M8.900 7.100 V9.700 H6.300" stroke="#ececec" stroke-width=".9" fill="none"/></svg>
<svg style="left:1156.800px;top:596px;width:15.400px;height:18px" viewBox="0 0 15.400 18">
<path d="M0 0 H15.400 V2 H0 Z M0 16 H15.400 V18 H0 Z" fill="#5e5e5e"/>
<path d="M1.600 2 H13.800 C13.800 6 10.400 7.400 9.600 9 C10.400 10.600 13.800 12 13.800 16 H1.600 C1.600 12 5 10.600 5.800 9 C5 7.400 1.600 6 1.600 2 Z" fill="#5e5e5e"/>
<path d="M4.400 15.600 C5 13 7 12.400 7.700 11.200 C8.400 12.400 10.400 13 11 15.600 Z" fill="#f2f2f2"/></svg>
<svg style="left:1187.700px;top:598px;width:19.600px;height:15px" viewBox="0 0 19.600 15">
<path d="M1.400 2.600 H5.400 L7 0 H12.600 L14.200 2.600 H18.200 Q19.600 2.600 19.600 4 V13.600 Q19.600 15 18.200 15 H1.400 Q0 15 0 13.600 V4 Q0 2.600 1.400 2.600 Z" fill="#c8c8c8"/>
<circle cx="9.800" cy="8.600" r="3.300" fill="none" stroke="#f2f2f2" stroke-width="1.700"/></svg>
<svg style="left:1219.200px;top:595.800px;width:21.500px;height:20px" viewBox="0 0 21.500 20">
<rect x="4.400" y="0" width="17" height="5.600" fill="#5e5e5e"/><rect x="4.400" y="7.200" width="17" height="5.600" fill="#5e5e5e"/><rect x="4.400" y="14.400" width="17" height="5.600" fill="#5e5e5e"/>
<rect x="13" y="2" width="6" height="1.600" fill="#f2f2f2"/><rect x="14" y="9.200" width="5" height="1.600" fill="#f2f2f2"/><rect x="14" y="16.400" width="5" height="1.600" fill="#f2f2f2"/>
<circle cx="6.800" cy="13.200" r="7.400" fill="#f2f2f2"/><circle cx="6.800" cy="13.200" r="6.300" fill="#5e5e5e"/>
<path d="M4.800 9.600 L10.600 13.200 L4.800 16.800 Z" fill="#f2f2f2"/></svg>
<div class="card" id="card2" style="top:629px;height:238px"></div>
<div class="abs" style="left:630px;top:629px;width:74px;height:15px;background:#efefef;border-radius:0 0 3px 3px"></div>
<svg style="left:658.500px;top:631px;width:17.500px;height:10.400px" viewBox="0 0 17.500 10.400"><path d="M0 0 H17.500 L8.750 10.400 Z" fill="#858585"/></svg>
<div class="box" style="left:959px;top:647px;width:35px;height:32px"></div>
<div class="t " style="top:653.61px;font-size:12.1px;line-height:20px;color:#333;letter-spacing:-0.102px;left:964.10px;">50</div>
<svg style="left:981.6px;top:661.4px;width:7.6px;height:4.8px" viewBox="0 0 7.6 4.8"><path d="M1 1 L3.8 3.8 L6.6 1" fill="none" stroke="#444" stroke-width="1.1" stroke-linecap="round" stroke-linejoin="round"/></svg>
<div class="t " style="top:653.39px;font-size:13.3px;line-height:20px;color:#333;letter-spacing:0.394px;left:999.50px;">| 31 restore points</div>
<svg style="left:1121.3px;top:658.8px;width:7px;height:11px" viewBox="0 0 7 11"><path d="M6 .8 L1.200 5.500 L6 10.200" fill="none" stroke="#888" stroke-width="1.300"/></svg>
<div class="box" style="left:1135px;top:648px;width:30px;height:32px"></div>
<div class="t " style="top:653.39px;font-size:13.3px;line-height:20px;color:#333;left:1146.50px;">1</div>
<div class="t " style="top:653.39px;font-size:13.3px;line-height:20px;color:#333;letter-spacing:-0.199px;left:1169.40px;">/ 1</div>
<svg style="left:1192.3px;top:658.8px;width:7px;height:11px" viewBox="0 0 7 11"><path d="M1 .8 L5.800 5.500 L1 10.200" fill="none" stroke="#888" stroke-width="1.300"/></svg>
<div class="abs" style="left:1206.4px;top:654.3px;width:18px;height:3px;background:#555"></div><div class="abs" style="left:1209.4px;top:659.8px;width:12px;height:3px;background:#555"></div><div class="abs" style="left:1212.4px;top:665.3px;width:6px;height:3px;background:#555"></div>
<div class="abs" style="left:101px;top:692px;width:365px;height:161px;border:1px solid #dcdcdc;border-radius:4px 4px 0 0;background:#fafafa"></div>
<div class="abs" style="left:102px;top:693px;width:363px;height:35px;background:#f3f3f3;border-bottom:1px solid #dcdcdc;border-radius:3px 3px 0 0"></div>
<div class="t " style="top:702.11px;font-size:11.8px;line-height:20px;color:#999;font-weight:700;letter-spacing:0.151px;left:112.20px;">SUMMARY</div>
<div class="t " style="top:730.35px;font-size:11.7px;line-height:20px;color:#333;letter-spacing:0.007px;left:112.30px;-webkit-text-stroke:.2px #333;">HYCU UUID</div>
<div class="t " style="top:754.35px;font-size:11.7px;line-height:20px;color:#333;letter-spacing:-0.212px;left:112.30px;-webkit-text-stroke:.2px #333;">SOURCE UUID</div>
<div class="t " style="top:778.25px;font-size:11.7px;line-height:20px;color:#333;letter-spacing:-0.321px;left:112.30px;-webkit-text-stroke:.2px #333;">OPERATING SYSTEM</div>
<div class="t " style="top:802.25px;font-size:11.7px;line-height:20px;color:#333;letter-spacing:-0.330px;left:112.30px;-webkit-text-stroke:.2px #333;">IP ADDRESS</div>
<div class="t " style="top:826.25px;font-size:11.7px;line-height:20px;color:#333;letter-spacing:-0.305px;left:112.30px;-webkit-text-stroke:.2px #333;">DISK CAPACITY</div>
<svg style="left:284.4px;top:735.3px;width:12px;height:11px" viewBox="0 0 12 11"><path d="M3.600 2.600 V.7 H11.300 V7.600 H9.400" fill="none" stroke="#333" stroke-width="1.400"/><rect x=".7" y="3.200" width="7.800" height="7.100" fill="#fafafa" stroke="#333" stroke-width="1.400"/><rect x=".7" y="3.200" width="7.800" height="2" fill="#333"/></svg>
<svg style="left:284.4px;top:759.3px;width:12px;height:11px" viewBox="0 0 12 11"><path d="M3.600 2.600 V.7 H11.300 V7.600 H9.400" fill="none" stroke="#333" stroke-width="1.400"/><rect x=".7" y="3.200" width="7.800" height="7.100" fill="#fafafa" stroke="#333" stroke-width="1.400"/><rect x=".7" y="3.200" width="7.800" height="2" fill="#333"/></svg>
<div class="t " style="top:730.03px;font-size:12.6px;line-height:20px;color:#444;letter-spacing:-0.222px;left:297.80px;">5395cda8-b28a-413c-91e...</div>
<div class="t " style="top:754.03px;font-size:12.6px;line-height:20px;color:#444;letter-spacing:-0.222px;left:297.80px;">1d251e17-80c7-463a-8c7...</div>
<div class="t " style="top:777.93px;font-size:12.6px;line-height:20px;color:#444;letter-spacing:-0.137px;left:281.50px;">Linux 5.13.0-39-generic #44...</div>
<div class="t " style="top:801.93px;font-size:12.6px;line-height:20px;color:#444;letter-spacing:-0.308px;left:379.40px;">192.168.0.43</div>
<div class="t " style="top:825.93px;font-size:12.6px;line-height:20px;color:#444;letter-spacing:-0.510px;left:407.30px;">127 GiB</div>
<div class="sb" style="left:455.200px;top:740px;height:49px"></div>
<div class="abs" style="left:481px;top:692px;width:752px;height:157px;border-left:1px solid #dcdcdc;border-right:1px solid #dcdcdc"></div>
<div class="thead" style="left:481px;top:692px;width:752px;height:35px">
<div class="vl" style="left:381px"></div>
<div class="vl" style="left:494px"></div>
<div class="vl" style="left:621px"></div>
<div class="t " style="top:7.15px;font-size:11.7px;line-height:20px;color:#999;font-weight:700;letter-spacing:-0.196px;left:8.00px;">RESTORE POINT</div>
<div class="t " style="top:7.15px;font-size:11.7px;line-height:20px;color:#999;font-weight:700;letter-spacing:0.112px;left:391.10px;">COMPLIA...</div>
<div class="t " style="top:7.15px;font-size:11.7px;line-height:20px;color:#999;font-weight:700;letter-spacing:-0.164px;left:510.80px;">BACKUP STATUS</div>
<div class="t " style="top:7.15px;font-size:11.7px;line-height:20px;color:#999;font-weight:700;letter-spacing:-0.381px;left:636.80px;">RESTORE STATUS</div>
</div>
<svg style="left:952.2px;top:702.7px;width:15px;height:14.600px" viewBox="0 0 15 14.600"><ellipse cx="7.500" cy="7.300" rx="6.650" ry="6.450" fill="none" stroke="#8f8f8f" stroke-width="1.700"/></svg>
<div class="abs" style="left:952.2px;top:702.7px;width:15px;height:14.600px;color:#8a8a8a;font-size:10.500px;font-weight:700;line-height:15px;text-align:center">?</div>
<div class="abs" style="left:482px;top:727px;width:750px;height:122px;overflow:hidden">
<div class="tr sel" style="top:0px;height:33px">
<div class="t " style="top:6.45px;font-size:14.3px;line-height:20px;color:#333;letter-spacing:0.071px;left:8.00px;">4/13/2022 5:01:22 AM</div>
<div class="badge" style="left:169.9px;top:6.4px;background:#2ca5b7">I</div>
<div class="badge" style="left:189.9px;top:6.4px;background:#9355e9">B</div>
<div class="badge" style="left:251.8px;top:6.4px;background:#d685bf">S</div>
<svg class="ok" style="left:431.10px;top:7.70px;width:15.6px;height:15.6px" viewBox="0 0 16 16"><circle cx="8" cy="8" r="8" fill="#069c74"/><path d="M4.2 8.3 L7 11 L11.9 5.6" fill="none" stroke="#fff" stroke-width="1.9"/></svg>
<svg class="ok" style="left:551.10px;top:7.70px;width:15.6px;height:15.6px" viewBox="0 0 16 16"><circle cx="8" cy="8" r="8" fill="#069c74"/><path d="M4.2 8.3 L7 11 L11.9 5.6" fill="none" stroke="#fff" stroke-width="1.9"/></svg>
</div>
<div class="tr" style="top:33px;height:33px">
<div class="t " style="top:6.30px;font-size:14.3px;line-height:20px;color:#333;letter-spacing:0.071px;left:8.00px;">4/13/2022 4:10:24 AM</div>
<div class="badge" style="left:169.9px;top:6.2px;background:#2ca5b7">I</div>
<div class="badge" style="left:189.9px;top:6.2px;background:#9355e9">B</div>
<div class="badge" style="left:251.8px;top:6.2px;background:#d685bf">S</div>
<svg class="ok" style="left:431.10px;top:7.55px;width:15.6px;height:15.6px" viewBox="0 0 16 16"><circle cx="8" cy="8" r="8" fill="#069c74"/><path d="M4.2 8.3 L7 11 L11.9 5.6" fill="none" stroke="#fff" stroke-width="1.9"/></svg>
<svg class="ok" style="left:551.10px;top:7.55px;width:15.6px;height:15.6px" viewBox="0 0 16 16"><circle cx="8" cy="8" r="8" fill="#069c74"/><path d="M4.2 8.3 L7 11 L11.9 5.6" fill="none" stroke="#fff" stroke-width="1.9"/></svg>
</div>
<div class="tr odd" style="top:66px;height:33px">
<div class="t " style="top:6.15px;font-size:14.3px;line-height:20px;color:#333;letter-spacing:0.126px;left:8.00px;">4/13/2022 3:11:09 AM</div>
<div class="badge" style="left:169.9px;top:6.1px;background:#2ca5b7">I</div>
<div class="badge" style="left:189.9px;top:6.1px;background:#9355e9">B</div>
<div class="badge" style="left:251.8px;top:6.1px;background:#d685bf">S</div>
<div class="t " style="top:-1.61px;font-size:18.5px;line-height:24px;color:#c6c6c6;left:546.50px;">vat</div>
<svg class="ok" style="left:431.10px;top:7.40px;width:15.6px;height:15.6px" viewBox="0 0 16 16"><circle cx="8" cy="8" r="8" fill="#069c74"/><path d="M4.2 8.3 L7 11 L11.9 5.6" fill="none" stroke="#fff" stroke-width="1.9"/></svg>
<svg class="ok" style="left:551.10px;top:7.40px;width:15.6px;height:15.6px" viewBox="0 0 16 16"><circle cx="8" cy="8" r="8" fill="#069c74"/><path d="M4.2 8.3 L7 11 L11.9 5.6" fill="none" stroke="#fff" stroke-width="1.9"/></svg>
</div>
<div class="tr" style="top:99px;height:33px">
<div class="t " style="top:6.00px;font-size:14.3px;line-height:20px;color:#333;letter-spacing:0.071px;left:8.00px;">4/13/2022 2:26:09 AM</div>
<div class="badge" style="left:169.9px;top:6.0px;background:#2ca5b7">I</div>
<div class="badge" style="left:189.9px;top:6.0px;background:#9355e9">B</div>
<div class="badge" style="left:251.8px;top:6.0px;background:#d685bf">S</div>
<svg class="ok" style="left:431.10px;top:7.25px;width:15.6px;height:15.6px" viewBox="0 0 16 16"><circle cx="8" cy="8" r="8" fill="#069c74"/><path d="M4.2 8.3 L7 11 L11.9 5.6" fill="none" stroke="#fff" stroke-width="1.9"/></svg>
<svg class="ok" style="left:551.10px;top:7.25px;width:15.6px;height:15.6px" viewBox="0 0 16 16"><circle cx="8" cy="8" r="8" fill="#069c74"/><path d="M4.2 8.3 L7 11 L11.9 5.6" fill="none" stroke="#fff" stroke-width="1.9"/></svg>
</div>
</div>
<div class="abs" style="left:1017.500px;top:826px;width:100px;height:4.500px;background:#f2f2f2"></div>
<div class="sb" style="left:1222px;top:739px;height:49px"></div>
</body>
</html>
